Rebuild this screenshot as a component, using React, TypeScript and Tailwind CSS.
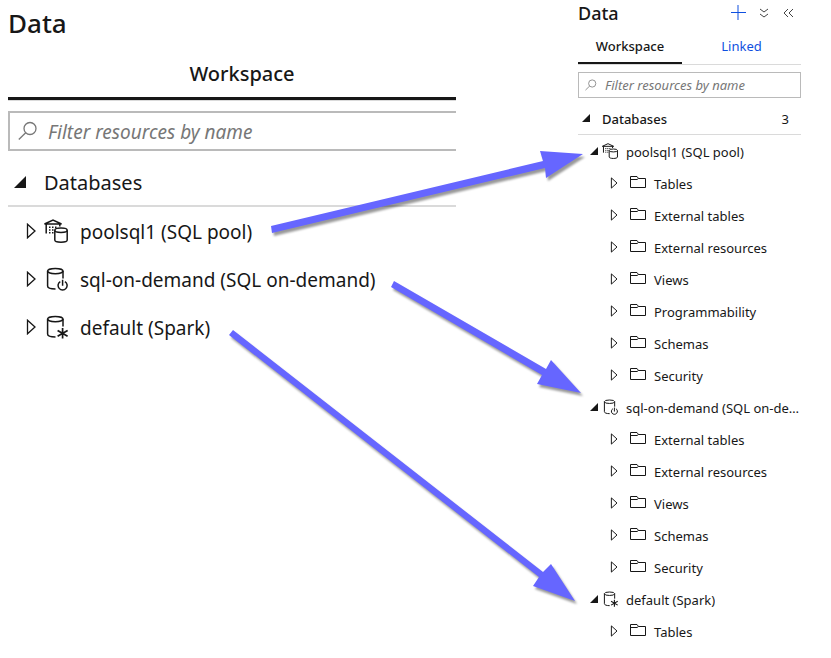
import type { ReactNode } from "react";

type IconKind = "pool" | "onDemand" | "spark";

interface Database {
  name: string;
  kind: IconKind;
  folders: string[];
}

const databases: Database[] = [
  {
    name: "poolsql1 (SQL pool)",
    kind: "pool",
    folders: [
      "Tables",
      "External tables",
      "External resources",
      "Views",
      "Programmability",
      "Schemas",
      "Security",
    ],
  },
  {
    name: "sql-on-demand (SQL on-demand)",
    kind: "onDemand",
    folders: [
      "External tables",
      "External resources",
      "Views",
      "Schemas",
      "Security",
    ],
  },
  { name: "default (Spark)", kind: "spark", folders: ["Tables"] },
];

function Icon({
  className,
  viewBox,
  children,
}: {
  className: string;
  viewBox: string;
  children: ReactNode;
}) {
  return (
    <svg
      className={className}
      viewBox={viewBox}
      fill="none"
      stroke="currentColor"
      aria-hidden="true"
    >
      {children}
    </svg>
  );
}

function SearchIcon({ className }: { className: string }) {
  return (
    <Icon className={className} viewBox="0 0 20 20">
      <circle cx="12" cy="7.5" r="6" strokeWidth="1.3" />
      <path d="M7.7 11.8L.8 18.5" strokeWidth="1.3" />
    </Icon>
  );
}

function OpenTriangle({ className }: { className: string }) {
  return (
    <Icon className={className} viewBox="0 0 12 12">
      <path d="M12 0V12H0Z" fill="currentColor" stroke="none" />
    </Icon>
  );
}

function ClosedTriangle({ className }: { className: string }) {
  return (
    <Icon className={className} viewBox="0 0 10 16">
      <path d="M1.5 1.2V14.8L9 8Z" strokeWidth="1.3" />
    </Icon>
  );
}

function FolderIcon() {
  return (
    <Icon className="mb-0.5 h-3 w-4 shrink-0" viewBox="0 0 16 12">
      <path d="M.5 11.5V.5H7L8.5 2.5H15.5V11.5Z" />
      <path d="M.5 3.5H7L8.5 2.5" />
    </Icon>
  );
}

function DatabaseIcon({
  kind,
  className,
}: {
  kind: IconKind;
  className: string;
}) {
  if (kind === "pool") {
    return (
      <Icon className={className} viewBox="0 0 24 24">
        <g strokeWidth="1.5">
          <path d="M.5 5L9 1L17.5 5Z" />
          <path d="M2.2 5V14.5M15.8 5V7.5" />
          <path
            d="M5 8.2H13M5 11H10M5 13.8H10"
            strokeDasharray="1.5 1.5"
          />
          <ellipse cx="17" cy="11.2" rx="6.2" ry="2.2" />
          <path d="M10.8 11.2V21C10.8 22.3 13.5 23.2 17 23.2S23.2 22.3 23.2 21V11.2" />
        </g>
      </Icon>
    );
  }

  return (
    <Icon className={className} viewBox="0 0 24 24">
      <g strokeWidth="1.5">
        <ellipse cx="11.3" cy="4.1" rx="7.7" ry="2.6" />
        <path d="M3.6 4.1V19C3.6 20.8 6.5 22 11.5 22M19 4.1V11.5" />
        {kind === "onDemand" ? (
          <path d="M16.3 14.6A4.5 4.5 0 1 0 20.9 14.6M18.6 12.8V18.8" />
        ) : (
          <path
            d="M18.6 13V23.6M13.6 15.4L23.6 21.2M13.6 21.2L23.6 15.4"
            strokeWidth="1.7"
          />
        )}
      </g>
    </Icon>
  );
}

function ZoomedPanel() {
  return (
    <section className="min-w-0 flex-1">
      <h2 className="h-12 text-[26px] leading-[46px] font-medium">Data</h2>
      <div className="border-b border-[#dadada]">
        <button className="block h-13 w-full border-b-3 border-[#171717] pt-0.5 pl-5 text-xl font-medium">
          Workspace
        </button>
      </div>
      <label className="mt-2.5 flex h-10 items-center gap-2.5 border-2 border-r-0 border-[#bababa] pl-2 text-[#777]">
        <SearchIcon className="size-5 shrink-0" />
        <input
          aria-label="Filter resources by name"
          placeholder="Filter resources by name"
          className="w-full pt-0.5 text-[19px] italic outline-none placeholder:text-[#777]"
        />
      </label>
      <button className="flex h-14 w-full items-center border-b-2 border-[#dadada] pt-2 pl-1.5 text-xl">
        <OpenTriangle className="mr-4.5 size-3" />
        <span className="pt-0.5">Databases</span>
      </button>
      <ul>
        {databases.map((db) => (
          <li key={db.name}>
            <button className="flex h-12 w-full items-center pl-4.5 text-[19px] whitespace-nowrap">
              <ClosedTriangle className="mr-2 h-4 w-2.5 shrink-0" />
              <DatabaseIcon kind={db.kind} className="mr-3 size-6 shrink-0" />
              <span className="pt-0.5">{db.name}</span>
            </button>
          </li>
        ))}
      </ul>
    </section>
  );
}

function ExplorerPanel() {
  return (
    <section className="w-[223px] shrink-0 text-[13px]">
      <header className="flex h-6.5 items-center">
        <h2 className="flex-1 text-lg font-medium">Data</h2>
        <button aria-label="Add" className="mr-3 text-[#0f50e0]">
          <Icon className="size-4" viewBox="0 0 16 16">
            <path d="M8 0V15" strokeWidth="2" strokeOpacity="0.5" />
            <path d="M1 7.5H16" />
          </Icon>
        </button>
        <button aria-label="Expand all" className="mr-3 text-[#444]">
          <Icon className="size-3" viewBox="0 0 12 12">
            <path d="M2 2L6 5L10 2M2 7L6 10L10 7" />
          </Icon>
        </button>
        <button aria-label="Collapse panel" className="mr-[7px] text-[#444]">
          <Icon className="size-3" viewBox="0 0 12 12">
            <path d="M6 2L2 6L6 10M11 2L7 6L11 10" />
          </Icon>
        </button>
      </header>
      <div className="flex h-[39px] border-b border-[#dadada]">
        <button className="w-26 border-b-2 border-[#171717] pt-1.5 font-medium">
          Workspace
        </button>
        <button className="flex-1 pt-1 text-[#0f50e0]">Linked</button>
      </div>
      <label className="mt-[7px] flex h-6.5 items-center gap-2 border border-[#bababa] pl-1.5 text-[#777]">
        <SearchIcon className="size-3 shrink-0" />
        <input
          aria-label="Filter resources by name"
          placeholder="Filter resources by name"
          className="w-full pt-0.5 italic outline-none placeholder:text-[#777]"
        />
      </label>
      <button className="flex h-[37px] w-full items-center border-b border-[#dadada] pt-1 pr-3 pl-1">
        <OpenTriangle className="mr-3 size-2" />
        <span className="pt-1 font-medium">Databases</span>
        <span className="ml-auto pt-1">3</span>
      </button>
      <ul>
        {databases.map((db) => (
          <li key={db.name}>
            <button className="flex h-8 w-full items-center pl-3 text-left">
              <OpenTriangle className="mr-1 size-2 shrink-0" />
              <DatabaseIcon kind={db.kind} className="mr-2 size-4 shrink-0" />
              <span className="truncate pt-1">{db.name}</span>
            </button>
            <ul>
              {db.folders.map((folder) => (
                <li key={folder}>
                  <button className="flex h-8 w-full items-center pl-8">
                    <ClosedTriangle className="mr-3 h-3 w-2 shrink-0" />
                    <FolderIcon />
                    <span className="ml-2 pt-1">{folder}</span>
                  </button>
                </li>
              ))}
            </ul>
          </li>
        ))}
      </ul>
    </section>
  );
}

function Arrows() {
  return (
    <svg
      className="pointer-events-none absolute top-0 left-0 h-[658px] w-[831px] drop-shadow-[2px_3px_1px_rgba(0,0,0,0.4)]"
      viewBox="0 0 831 658"
      fill="#6666ff"
      aria-hidden="true"
    >
      <path d="M271 226L543 161L540 151L583 154L546 178L545 168L272 233Z" />
      <path d="M394 281L546 369L551 360L581 393L537 384L542 375L391 287Z" />
      <path d="M233 330L543 572L551 564L575 601L533 586L539 577L229 335Z" />
    </svg>
  );
}

export default function App() {
  return (
    <main className="relative flex min-h-screen gap-[122px] bg-white pr-[30px] pl-2 font-['Noto_Sans',sans-serif] text-[#171717]">
      <ZoomedPanel />
      <ExplorerPanel />
      <Arrows />
    </main>
  );
}
